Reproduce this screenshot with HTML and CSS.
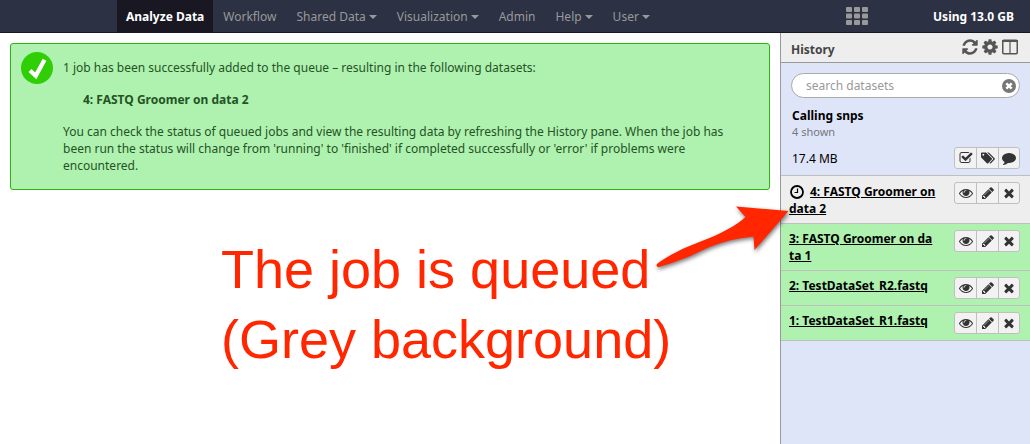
FILE: index.html
```
<!DOCTYPE html>
<html lang="en">
<head>
<meta charset="utf-8">
<title>Galaxy</title>
<link rel="stylesheet" href="styles.css">
</head>
<body>
<svg class="sprite" aria-hidden="true">
  <symbol id="times" viewBox="0 0 1792 1792"><path d="M1490 1322q0 40-28 68l-136 136q-28 28-68 28t-68-28l-294-294-294 294q-28 28-68 28t-68-28l-136-136q-28-28-28-68t28-68l294-294-294-294q-28-28-28-68t28-68l136-136q28-28 68-28t68 28l294 294 294-294q28-28 68-28t68 28l136 136q28 28 28 68t-28 68l-294 294 294 294q28 28 28 68z"/></symbol>
  <symbol id="eye" viewBox="0 0 1792 1792"><path d="M1664 960q-152-236-381-353 61 104 61 225 0 185-131.500 316.500t-316.500 131.500-316.500-131.500-131.500-316.500q0-121 61-225-229 117-381 353 133 205 333.500 326.500t434.500 121.500 434.500-121.500 333.500-326.500zm-720-384q0-20-14-34t-34-14q-125 0-214.500 89.500t-89.500 214.500q0 20 14 34t34 14 34-14 14-34q0-86 61-147t147-61q20 0 34-14t14-34zm848 384q0 34-20 69-140 230-376.500 368.500t-499.500 138.500-499.500-139-376.500-368q-20-35-20-69t20-69q140-229 376.500-368t499.500-139 499.500 139 376.500 368q20 35 20 69z"/></symbol>
  <symbol id="pencil" viewBox="0 0 1792 1792"><path d="M491 1536l91-91-235-235-91 91v107h128v128h107zm523-928q0-22-22-22-10 0-17 7l-542 542q-7 7-7 17 0 22 22 22 10 0 17-7l542-542q7-7 7-17zm-54-192l416 416-832 832h-416v-416zm683 96q0 53-37 90l-166 166-416-416 166-165q36-38 90-38 53 0 91 38l235 234q37 39 37 91z"/></symbol>
  <symbol id="check" viewBox="0 0 1792 1792"><path d="M1472 930v318q0 119-84.500 203.500t-203.500 84.500h-832q-119 0-203.500-84.500t-84.500-203.500v-832q0-119 84.500-203.500t203.500-84.500h832q63 0 117 25 15 7 18 23 3 17-9 29l-49 49q-10 10-23 10-3 0-9-2-23-6-45-6h-832q-66 0-113 47t-47 113v832q0 66 47 113t113 47h832q66 0 113-47t47-113v-254q0-13 9-22l64-64q10-10 23-10 6 0 12 3 20 8 20 29zm231-489l-814 814q-24 24-57 24t-57-24l-430-430q-24-24-24-57t24-57l110-110q24-24 57-24t57 24l263 263 647-647q24-24 57-24t57 24l110 110q24 24 24 57t-24 57z"/></symbol>
  <symbol id="comment" viewBox="0 0 1792 1792"><path d="M1792 896q0 174-120 321.500t-326 233-450 85.500q-70 0-145-8-198 175-460 242-49 14-114 22-17 2-30.500-9t-17.500-29v-1q-3-4-.5-12t2-10 4.500-9.500l6-9 7-8.500 8-9q7-8 31-34.500t34.500-38 31-39.500 32.500-51 27-59 26-76q-157-89-247.500-220t-90.500-281q0-130 71-248.500t191-204.500 286-136.500 348-50.500q244 0 450 85.500t326 233 120 321.500z"/></symbol>
  <symbol id="tags" viewBox="0 0 1920 1792"><path d="M448 448q0-53-37.500-90.500t-90.500-37.500-90.500 37.500-37.500 90.500 37.500 90.500 90.500 37.500 90.500-37.500 37.500-90.500zm1067 576q0 53-37 90l-491 492q-39 37-91 37-53 0-90-37l-715-716q-38-37-64.500-101t-26.500-117v-416q0-52 38-90t90-38h416q53 0 117 26.500t102 64.500l715 714q37 39 37 91zm384 0q0 53-37 90l-491 492q-39 37-91 37-36 0-59-14t-53-45l470-470q37-37 37-90 0-52-37-91l-715-714q-38-38-102-64.500t-117-26.500h224q53 0 117 26.500t102 64.500l715 714q37 39 37 91z"/></symbol>
  <symbol id="refresh" viewBox="0 0 1792 1792"><path d="M1639 1056q0 5-1 7-64 268-268 434.500t-478 166.500q-146 0-282.500-55t-243.500-157l-129 129q-19 19-45 19t-45-19-19-45v-448q0-26 19-45t45-19h448q26 0 45 19t19 45-19 45l-137 137q71 66 161 102t187 36q134 0 250-65t186-179q11-17 53-117 8-23 30-23h192q13 0 22.500 9.500t9.500 22.500zm25-800v448q0 26-19 45t-45 19h-448q-26 0-45-19t-19-45 19-45l138-138q-148-137-349-137-134 0-250 65t-186 179q-11 17-53 117-8 23-30 23h-199q-13 0-22.500-9.500t-9.500-22.500v-7q65-268 270-434.500t480-166.500q146 0 284 55.500t245 156.500l130-129q19-19 45-19t45 19 19 45z"/></symbol>
  <symbol id="cog" viewBox="0 0 1792 1792"><path d="M1152 896q0-106-75-181t-181-75-181 75-75 181 75 181 181 75 181-75 75-181zm512-109v222q0 12-8 23t-20 13l-185 28q-19 54-39 91 35 50 107 138 10 12 10 25t-9 23q-27 37-99 108t-94 71q-12 0-26-9l-138-108q-44 23-91 38-16 136-29 186-7 28-36 28h-222q-14 0-24.500-8.500t-11.500-21.500l-28-184q-49-16-90-37l-141 107q-10 9-25 9-14 0-25-11-126-114-165-168-7-10-7-23 0-12 8-23 15-21 51-66.500t54-70.500q-27-50-41-99l-183-27q-13-2-21-12.500t-8-23.500v-222q0-12 8-23t19-13l186-28q14-46 39-92-40-57-107-138-10-12-10-24 0-10 9-23 26-36 98.500-107.500t94.500-71.500q13 0 26 10l138 107q44-23 91-38 16-136 29-186 7-28 36-28h222q14 0 24.500 8.500t11.500 21.500l28 184q49 16 90 37l142-107q9-9 24-9 13 0 25 10 129 119 165 170 7 8 7 22 0 12-8 23-15 21-51 66.500t-54 70.500q26 50 41 98l183 28q13 2 21 12.500t8 23.500z"/></symbol>
</svg>

<header class="masthead">
  <nav class="menu">
    <a class="menu-item active" href="#">Analyze Data</a>
    <a class="menu-item" href="#">Workflow</a>
    <a class="menu-item dropdown" href="#">Shared Data</a>
    <a class="menu-item dropdown" href="#">Visualization</a>
    <a class="menu-item" href="#">Admin</a>
    <a class="menu-item dropdown" href="#">Help</a>
    <a class="menu-item dropdown" href="#">User</a>
  </nav>
  <button class="apps" aria-label="Applications">
    <svg width="22" height="18" viewBox="0 0 22 18"><g><rect width="6" height="5" rx="1"/><rect x="8" width="6" height="5" rx="1"/><rect x="16" width="6" height="5" rx="1"/><rect y="6.500" width="6" height="5" rx="1"/><rect x="8" y="6.500" width="6" height="5" rx="1"/><rect x="16" y="6.500" width="6" height="5" rx="1"/><rect y="13" width="6" height="5" rx="1"/><rect x="8" y="13" width="6" height="5" rx="1"/><rect x="16" y="13" width="6" height="5" rx="1"/></g></svg>
  </button>
  <span class="quota">Using 13.0 GB</span>
</header>

<div class="columns">
  <main class="center">
    <section class="message">
      <svg class="done" viewBox="0 0 32 32"><circle cx="16" cy="16" r="16" fill="#30cf05"/><path d="M9 18.500L14.800 23.800L23.500 7.800" fill="none" stroke="#fff" stroke-width="4.200"/></svg>
      <div class="message-text">
        <p>1 job has been successfully added to the queue – resulting in the following datasets:</p>
        <p class="dataset">4: FASTQ Groomer on data 2</p>
        <p>You can check the status of queued jobs and view the resulting data by refreshing the History pane. When the job has been run the status will change from 'running' to 'finished' if completed successfully or 'error' if problems were encountered.</p>
      </div>
    </section>
  </main>

  <aside class="history">
    <div class="panel-head">
      <h2>History</h2>
      <div class="panel-tools">
        <button aria-label="Refresh history"><svg class="tool"><use href="#refresh"/></svg></button>
        <button aria-label="History options"><svg class="tool"><use href="#cog"/></svg></button>
        <button aria-label="View all histories"><svg class="tool" viewBox="0 0 18 18"><rect x="1.750" y="2.250" width="14.500" height="13.500" rx="1" fill="none" stroke="#555" stroke-width="1.500"/><path d="M1 2h16v2H1zM8.400 4h1.200v11H8.400z"/></svg></button>
      </div>
    </div>
    <div class="controls">
      <div class="search">
        <input type="text" placeholder="search datasets" aria-label="search datasets">
        <button class="clear" aria-label="Clear search"><svg viewBox="0 0 14 14"><circle cx="7" cy="7" r="7" fill="#777"/><path d="M4.300 4.300l5.400 5.400M9.700 4.300l-5.400 5.400" stroke="#fff" stroke-width="2.400"/></svg></button>
      </div>
      <h3>Calling snps</h3>
      <div class="shown">4 shown</div>
      <div class="size-row">
        <span>17.4 MB</span>
        <div class="actions">
          <button aria-label="Select datasets"><svg class="icon"><use href="#check"/></svg></button>
          <button aria-label="Edit tags"><svg class="icon"><use href="#tags"/></svg></button>
          <button aria-label="Edit annotation"><svg class="icon"><use href="#comment"/></svg></button>
        </div>
      </div>
    </div>
    <div class="item queued">
      <a class="title" href="#"><svg class="clock" viewBox="0 0 14 14"><circle cx="7" cy="7" r="6" fill="none" stroke="#000" stroke-width="1.800"/><path d="M7.500 3.500v4H4.500" fill="none" stroke="#000" stroke-width="1.200"/></svg><span>4: FASTQ Groomer on data 2</span></a>
      <div class="actions">
        <button aria-label="View data"><svg class="icon"><use href="#eye"/></svg></button>
        <button aria-label="Edit attributes"><svg class="icon"><use href="#pencil"/></svg></button>
        <button aria-label="Delete"><svg class="icon"><use href="#times"/></svg></button>
      </div>
    </div>
    <div class="item">
      <a class="title" href="#"><span>3: FASTQ Groomer on data 1</span></a>
      <div class="actions">
        <button aria-label="View data"><svg class="icon"><use href="#eye"/></svg></button>
        <button aria-label="Edit attributes"><svg class="icon"><use href="#pencil"/></svg></button>
        <button aria-label="Delete"><svg class="icon"><use href="#times"/></svg></button>
      </div>
    </div>
    <div class="item">
      <a class="title" href="#"><span>2: TestDataSet_R2.fastq</span></a>
      <div class="actions">
        <button aria-label="View data"><svg class="icon"><use href="#eye"/></svg></button>
        <button aria-label="Edit attributes"><svg class="icon"><use href="#pencil"/></svg></button>
        <button aria-label="Delete"><svg class="icon"><use href="#times"/></svg></button>
      </div>
    </div>
    <div class="item">
      <a class="title" href="#"><span>1: TestDataSet_R1.fastq</span></a>
      <div class="actions">
        <button aria-label="View data"><svg class="icon"><use href="#eye"/></svg></button>
        <button aria-label="Edit attributes"><svg class="icon"><use href="#pencil"/></svg></button>
        <button aria-label="Delete"><svg class="icon"><use href="#times"/></svg></button>
      </div>
    </div>
  </aside>
</div>

<div class="callout">The job is queued<br>(Grey background)</div>
<svg class="arrow" viewBox="0 0 140 70" aria-hidden="true"><path d="M138.500 11L86 6.500L95.500 17C87 25 72 33 57 39C38 46 20 54 7 64Q5.500 66.500 8.500 67.300C22 63 40 57 55 49C72 41 90 38 103.500 36.500L104.500 50Z"/></svg>
</body>
</html>
```
FILE: styles.css
```
* { box-sizing: border-box; }
body {
  margin: 0;
  min-height: 100vh;
  display: flex;
  flex-direction: column;
  position: relative;
  background: #fff;
  color: #000;
  font: 12px/17px "Lucida Grande", "Noto Sans", sans-serif;
}
p, h2, h3 { margin: 0; font-size: 12px; }
button { margin: 0; padding: 0; border: 0; background: none; font: inherit; display: flex; align-items: center; justify-content: center; }
svg { display: block; }
.sprite { position: absolute; width: 0; height: 0; }

.masthead {
  display: flex;
  align-items: stretch;
  height: 33px;
  padding: 0 16px 0 117px;
  background: #2c3143;
  border-bottom: 1px solid #181722;
}
.menu { display: flex; flex: 1; }
.menu-item {
  display: flex;
  align-items: center;
  padding: 0 10px;
  color: #999;
  text-decoration: none;
  white-space: nowrap;
}
.menu-item.active { padding: 0 9px; background: #181722; color: #fff; font-weight: 700; }
.dropdown::after {
  content: "";
  margin: 2px 0 0 3px;
  border: 4px solid transparent;
  border-top-color: #999;
  border-bottom: 0;
}
.apps { margin-right: 65px; fill: #999; }
.quota { align-self: center; color: #fff; font-weight: 700; white-space: nowrap; }

.columns { display: flex; flex: 1; }
.center { flex: 1; min-width: 0; padding: 10px; }
.message {
  display: flex;
  gap: 10px;
  padding: 8px 18px 15px 10px;
  border: 1px solid #2db413;
  border-radius: 3px;
  background: #aff1af;
  color: #255325;
}
.done { flex: none; width: 32px; height: 32px; }
.message-text { display: grid; gap: 15px; padding-top: 7px; }
.dataset { padding-left: 20px; font-weight: 700; }

.history { width: 250px; border-left: 1px solid #999; background: #dfe5f9; }
.panel-head {
  display: flex;
  align-items: center;
  justify-content: space-between;
  height: 30px;
  padding: 0 11px 0 10px;
  border-bottom: 1px solid #999;
  background: #eee;
}
.panel-head h2 { padding-top: 4px; color: #444; }
.panel-tools { display: flex; gap: 2px; padding-bottom: 2px; fill: #555; }
.tool { width: 18px; height: 18px; }

.controls { padding: 10px 10px 6px; }
.search { display: flex; align-items: center; position: relative; margin-bottom: 9px; }
.search input {
  width: 100%;
  height: 25px;
  padding: 0 30px 0 14px;
  border: 1px solid #aaa;
  border-radius: 13px;
  background: #fff;
  font: inherit;
}
.search input::placeholder { color: #999; opacity: 1; }
.clear { position: absolute; right: 4px; }
.clear svg { width: 14px; height: 14px; }
.controls h3 { padding-left: 1px; }
.shown { padding-left: 1px; color: #777; font-size: 11px; line-height: 16px; }
.size-row { display: flex; align-items: center; justify-content: space-between; margin-top: 7px; padding-left: 1px; }

.actions {
  display: flex;
  flex: none;
  border: 1px solid #bfbfbf;
  border-radius: 3px;
  background: #f2f2f2;
}
.actions button { width: 21px; height: 20px; }
.actions button + button { width: 22px; border-left: 1px solid #bfbfbf; }
.actions button:last-child { width: 21px; }
.icon { width: 14px; height: 14px; fill: #333; }

.item {
  display: flex;
  align-items: flex-start;
  justify-content: space-between;
  padding: 6px 10px 6px 8px;
  border-bottom: 1px solid #bfbfbf;
  background: #aff1af;
}
.item.queued { border-top: 1px solid #bfbfbf; background: #eee; }
.title { width: 147px; color: #000; font-weight: 700; word-break: break-all; text-decoration: none; }
.queued .title { padding-top: 1px; }
.title span { text-decoration: underline; }
.clock { display: inline-block; width: 14px; height: 14px; margin: 0 6px 0 1px; vertical-align: -3px; }

.callout {
  position: absolute;
  left: 221px;
  top: 234px;
  color: #ff2600;
  font: 54px/70px "Liberation Sans", Arial, sans-serif;
  white-space: nowrap;
}
.arrow {
  position: absolute;
  left: 650px;
  top: 200px;
  width: 140px;
  height: 70px;
  fill: #ff2600;
  overflow: visible;
  filter: drop-shadow(1px 2px 2px #0008);
}
```
